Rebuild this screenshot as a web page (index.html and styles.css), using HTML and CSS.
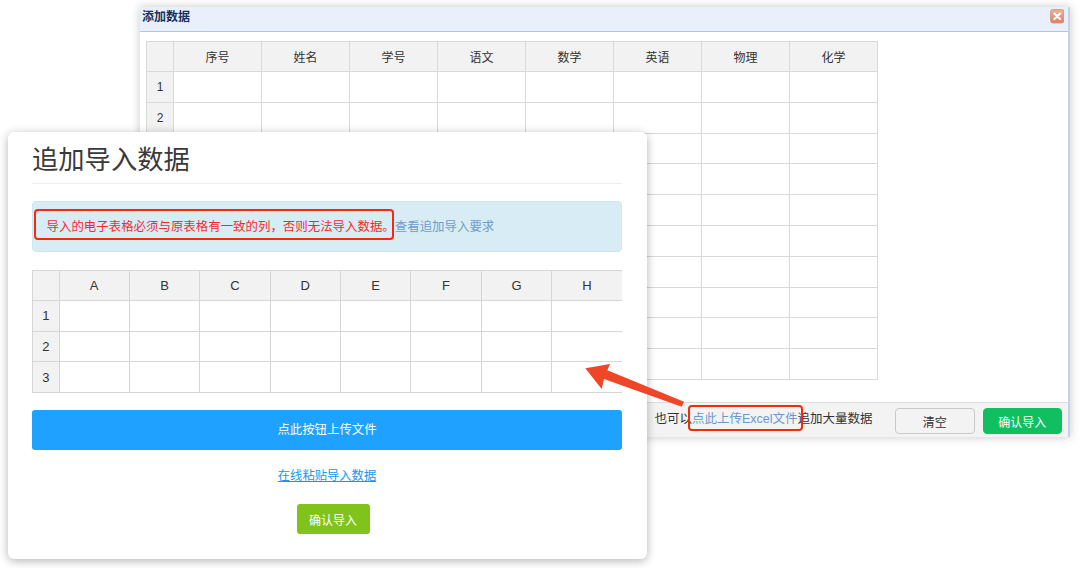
FILE: index.html
```html
<!DOCTYPE html>
<html lang="zh">
<head>
<meta charset="utf-8">
<title>追加导入数据</title>
<link rel="stylesheet" href="styles.css">
</head>
<body>
<main class="canvas">
  <section class="back-win">
    <header class="back-title">
      <h2>添加数据</h2>
      <svg class="close-icon" viewBox="0 0 15 15" aria-label="关闭">
        <defs>
          <linearGradient id="closeFill" x1="0" y1="0" x2="0" y2="1">
            <stop offset="0" stop-color="#f0ad95"/>
            <stop offset="1" stop-color="#dd7f63"/>
          </linearGradient>
        </defs>
        <rect x="0.5" y="0.5" width="14" height="14" rx="2.5" fill="url(#closeFill)" stroke="#cf9b89"/>
        <path d="M4.6 4.6l5.8 5.8M10.4 4.6l-5.8 5.8" stroke="#fff" stroke-width="2.4" stroke-linecap="round"/>
      </svg>
    </header>
    <div class="back-body">
      <table class="sheet sheet-back">
        <thead>
          <tr><th class="corner"></th><th>序号</th><th>姓名</th><th>学号</th><th>语文</th><th>数学</th><th>英语</th><th>物理</th><th>化学</th></tr>
        </thead>
        <tbody>
          <tr><th>1</th><td></td><td></td><td></td><td></td><td></td><td></td><td></td><td></td></tr>
          <tr><th>2</th><td></td><td></td><td></td><td></td><td></td><td></td><td></td><td></td></tr>
          <tr><th></th><td></td><td></td><td></td><td></td><td></td><td></td><td></td><td></td></tr>
          <tr><th></th><td></td><td></td><td></td><td></td><td></td><td></td><td></td><td></td></tr>
          <tr><th></th><td></td><td></td><td></td><td></td><td></td><td></td><td></td><td></td></tr>
          <tr><th></th><td></td><td></td><td></td><td></td><td></td><td></td><td></td><td></td></tr>
          <tr><th></th><td></td><td></td><td></td><td></td><td></td><td></td><td></td><td></td></tr>
          <tr><th></th><td></td><td></td><td></td><td></td><td></td><td></td><td></td><td></td></tr>
          <tr><th></th><td></td><td></td><td></td><td></td><td></td><td></td><td></td><td></td></tr>
          <tr><th></th><td></td><td></td><td></td><td></td><td></td><td></td><td></td><td></td></tr>
        </tbody>
      </table>
    </div>
    <footer class="back-foot">
      <p class="foot-text">，也可以<a class="foot-link">点此上传Excel文件</a>追加大量数据</p>
      <button class="btn-clear">清空</button>
      <button class="btn-ok">确认导入</button>
    </footer>
  </section>

  <section class="card">
    <h1 class="card-title">追加导入数据</h1>
    <div class="alert">
      <span class="alert-text">导入的电子表格必须与原表格有一致的列，否则无法导入数据。</span><a class="alert-link">查看追加导入要求</a>
    </div>
    <table class="sheet sheet-front">
      <thead>
        <tr><th class="corner"></th><th>A</th><th>B</th><th>C</th><th>D</th><th>E</th><th>F</th><th>G</th><th>H</th></tr>
      </thead>
      <tbody>
        <tr><th>1</th><td></td><td></td><td></td><td></td><td></td><td></td><td></td><td></td></tr>
        <tr><th>2</th><td></td><td></td><td></td><td></td><td></td><td></td><td></td><td></td></tr>
        <tr><th>3</th><td></td><td></td><td></td><td></td><td></td><td></td><td></td><td></td></tr>
      </tbody>
    </table>
    <button class="btn-upload">点此按钮上传文件</button>
    <a class="paste-link">在线粘贴导入数据</a>
    <button class="btn-confirm">确认导入</button>
  </section>

  <div class="mark mark-alert"></div>
  <div class="mark mark-link"></div>
  <svg class="arrow" viewBox="0 0 110 50" aria-hidden="true">
    <path d="M0.3 4.3 L25 0 L22.300 6.300 L99 37.700 L96.700 42.700 L19 15 L16.700 25 Z" fill="#ee4626"/>
  </svg>
</main>
</body>
</html>
```

FILE: styles.css
```css
* { box-sizing: border-box; }
html, body { margin: 0; padding: 0; }
body {
  width: 1080px;
  height: 568px;
  overflow: hidden;
  background: #fff;
  font-family: "Liberation Sans", "Noto Sans CJK SC", sans-serif;
  color: #333;
}
.canvas { position: relative; width: 1080px; height: 568px; overflow: hidden; }

/* back window */
.back-win {
  position: absolute;
  left: 140px;
  top: 7px;
  width: 930px;
  height: 430px;
  display: flex;
  flex-direction: column;
  background: #fff;
  border-right: 2px solid #c3d4ea;
  box-shadow: 0 0 9px rgba(0, 0, 0, .22);
}
.back-title {
  height: 24.500px;
  flex: none;
  display: flex;
  align-items: flex-start;
  justify-content: space-between;
  padding: 2px 4px 0 2px;
  background: #e9f0fc;
  border-bottom: 1px solid #a9c6ec;
}
.back-title h2 { margin: 1px 0 0; font-size: 12px; line-height: 14px; font-weight: 700; color: #14305f; }
.close-icon { width: 14.500px; height: 14.500px; display: block; }
.back-body { flex: 1; padding: 9.500px 6px 0; }
.back-foot {
  height: 35px;
  flex: none;
  display: flex;
  align-items: center;
  justify-content: flex-end;
  padding: 2px 6.500px 0 0;
  background: #f3f3f3;
  border-top: 1px solid #ddd;
}
.foot-text { margin: 0 22.500px 7px 0; font-size: 12.500px; color: #333; white-space: nowrap; }
.foot-link { color: #6a97cf; }
.btn-clear, .btn-ok {
  height: 26px;
  font: inherit;
  font-size: 12px;
  border-radius: 4px;
  padding: 0;
}
.btn-clear { width: 79.500px; background: #f3f3f3; border: 1px solid #c9c9c9; color: #333; margin-right: 8.500px; }
.btn-ok { width: 78.500px; background: #10c060; border: 1px solid #10c060; color: #fff; }

/* spreadsheets */
.sheet { border-collapse: collapse; table-layout: fixed; }
.sheet th, .sheet td { border: 1px solid #d9d9d9; padding: 0; text-align: center; }
.sheet th { background: #f2f2f2; font-weight: 400; color: #333; font-size: 12px; }
.sheet td { background: #fff; }
.sheet-back { width: 732px; }
.sheet-back th.corner { width: 27px; }
.sheet-back thead tr { height: 30px; }
.sheet-back tbody tr { height: 30.800px; }
.sheet-front { width: 590px; margin-top: 18px; }
.sheet-front th.corner { width: 26.500px; }
.sheet-front thead tr { height: 30.500px; }
.sheet-front tbody tr { height: 30.700px; }
.sheet-front th, .sheet-front td { border-color: #d6d6d6; }
.sheet-front th { font-size: 13px; }
.sheet-front tr > :last-child { border-right: 0; }

/* front card */
.card {
  position: absolute;
  left: 8px;
  top: 132px;
  width: 639px;
  height: 427px;
  padding: 0 25px 0 24px;
  display: flex;
  flex-direction: column;
  align-items: flex-start;
  background: #fff;
  border-radius: 6px;
  box-shadow: 0 2px 10px rgba(0, 0, 0, .3);
}
.card-title {
  width: 100%;
  height: 52px;
  margin: 0;
  padding-top: 9px;
  font-size: 26.300px;
  font-weight: 400;
  line-height: 38px;
  white-space: nowrap;
  color: #3a3a3a;
  border-bottom: 1px solid #eee;
}
.alert {
  width: 100%;
  height: 50.500px;
  margin-top: 17px;
  padding: 0 0 0 13.500px;
  display: flex;
  align-items: center;
  background: #d8ecf5;
  border: 1px solid #cde7f1;
  border-radius: 4px;
  font-size: 12.450px;
}
.alert-text { color: #f52a2a; white-space: nowrap; }
.alert-link { color: #6f9ccc; white-space: nowrap; }
.btn-upload {
  width: 100%;
  height: 39.500px;
  margin-top: 17px;
  padding: 0 0 1px;
  flex: none;
  background: #1ea1ff;
  border: 0;
  border-radius: 3px;
  color: #fff;
  font: inherit;
  font-size: 12.400px;
}
.paste-link {
  align-self: center;
  margin-top: 18.500px;
  font-size: 12.300px;
  line-height: 16px;
  color: #1795f0;
  text-decoration: underline;
}
.btn-confirm {
  align-self: center;
  width: 73px;
  height: 30px;
  margin: 20px 0 0 12px;
  padding: 0;
  flex: none;
  background: #80c31a;
  border: 0;
  border-radius: 3px;
  color: #fff;
  font: inherit;
  font-size: 12px;
}

/* annotations laid over the screenshot */
.mark {
  position: absolute;
  border: 2px solid #f32a0c;
  border-radius: 4px;
}
.mark-alert { left: 34px; top: 208.500px; width: 360px; height: 31px; }
.mark-link { left: 688px; top: 405px; width: 115px; height: 25.500px; }
.arrow { position: absolute; left: 585px; top: 364px; width: 110px; height: 50px; }
```
